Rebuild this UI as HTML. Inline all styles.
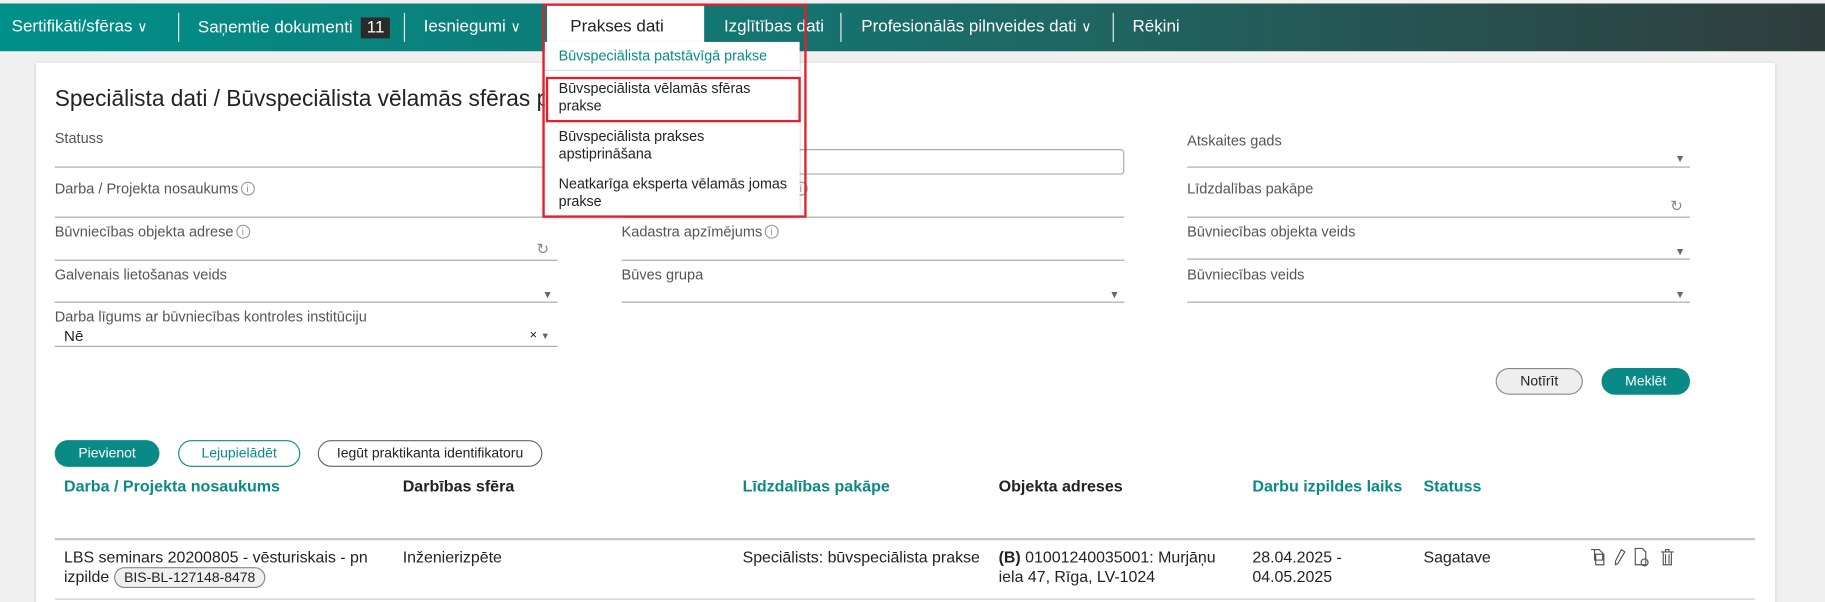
<!DOCTYPE html>
<html><head><meta charset="utf-8"><style>
*{box-sizing:border-box;margin:0;padding:0}
html,body{width:1825px;height:602px;overflow:hidden;background:#f0f0f0}
#w{width:1568px;height:517px;transform:scale(1.16390,1.1644);transform-origin:0 0;position:relative;font-family:"Liberation Sans",Arial,sans-serif;color:#222}
.a{position:absolute;white-space:nowrap}
.nav{position:absolute;left:0;top:3px;width:1568px;height:41px;background:linear-gradient(90deg,#00908a 0%,#0f7a76 35%,#1f6562 60%,#2f3d3c 100%)}
.ni{position:absolute;top:12px;color:#fff;font-size:14.6px}
.sep{position:absolute;top:8px;width:1px;height:25px;background:#e8f0f0}
.card{position:absolute;left:31px;top:54px;width:1494px;height:470px;background:#fff;box-shadow:0 0 3px rgba(0,0,0,.15)}
.lb{position:absolute;font-size:12.5px;color:#555;white-space:nowrap}
.ln{position:absolute;height:1px;background:#aaa;width:432px}
.ar{position:absolute;font-size:9px;color:#666}
.ic{display:inline-block;width:12px;height:12px;border:1px solid #999;border-radius:50%;font-size:9px;color:#999;text-align:center;line-height:11px;vertical-align:1px;margin-left:2px}
.btn{position:absolute;height:23px;border-radius:12px;font-size:12px;text-align:center;line-height:22px}
.th{position:absolute;top:410px;font-size:13.8px;font-weight:bold;color:#0a8a86}
.td{position:absolute;font-size:13.7px;color:#222;line-height:17px}
.dd{position:absolute;left:468px;top:36px;width:219px;height:149px;background:#fff;box-shadow:0 2px 4px rgba(0,0,0,.2)}
.di{position:absolute;left:12px;font-size:12.3px;color:#222;line-height:15px}
</style></head><body><div id="w">
<div class="nav">
<span class="ni" style="left:10px">Sertifikāti/sfēras <span style="font-size:12px">&#8744;</span></span>
<div class="sep" style="left:153px"></div>
<span class="ni" style="left:170px">Saņemtie dokumenti <span style="display:inline-block;background:#2a2a2a;padding:1px 5px;margin-left:3px">11</span></span>
<div class="sep" style="left:347px"></div>
<span class="ni" style="left:364px">Iesniegumi <span style="font-size:12px">&#8744;</span></span>
<div style="position:absolute;left:470px;top:0;width:135px;height:36px;background:#fff"></div>
<span class="ni" style="left:490px;color:#222">Prakses dati</span>
<span class="ni" style="left:622px">Izglītības dati</span>
<div class="sep" style="left:722px"></div>
<span class="ni" style="left:740px">Profesionālās pilnveides dati <span style="font-size:12px">&#8744;</span></span>
<div class="sep" style="left:956px"></div>
<span class="ni" style="left:973px">Rēķini</span>
</div>
<div class="card"></div>
<div class="a" style="left:47px;top:74px;font-size:19.5px;color:#222">Speciālista dati / Būvspeciālista vēlamās sfēras prakse</div>

<div class="lb" style="left:47px;top:112px">Statuss</div><div class="ln" style="left:47px;top:143px"></div>
<div class="lb" style="left:47px;top:155px">Darba / Projekta nosaukums<span class="ic">i</span></div><div class="ln" style="left:47px;top:186px"></div>
<div class="lb" style="left:47px;top:192px">Būvniecības objekta adrese<span class="ic">i</span></div><div class="ln" style="left:47px;top:223px"></div>
<div class="a" style="left:461px;top:206px;font-size:13px;color:#888">&#8635;</div>
<div class="lb" style="left:47px;top:229px">Galvenais lietošanas veids</div><div class="ln" style="left:47px;top:259px"></div><div class="ar" style="left:466px;top:248px">&#9660;</div>
<div class="lb" style="left:47px;top:265px">Darba līgums ar būvniecības kontroles institūciju</div>
<div class="a" style="left:55px;top:281px;font-size:13px">Nē</div><div class="a" style="left:455px;top:282px;font-size:11px">× <span style="font-size:8px;color:#666">&#9660;</span></div>
<div class="ln" style="left:47px;top:297px"></div>

<div style="position:absolute;left:534px;top:128px;width:432px;height:22px;border:1px solid #aaa;border-radius:3px"></div>
<div class="lb" style="left:680px;top:155px"><span class="ic">i</span></div><div class="ln" style="left:534px;top:186px"></div>
<div class="lb" style="left:534px;top:192px">Kadastra apzīmējums<span class="ic">i</span></div><div class="ln" style="left:534px;top:223px"></div>
<div class="lb" style="left:534px;top:229px">Būves grupa</div><div class="ln" style="left:534px;top:259px"></div><div class="ar" style="left:953px;top:248px">&#9660;</div>

<div class="lb" style="left:1020px;top:114px">Atskaites gads</div><div class="ln" style="left:1020px;top:143px"></div><div class="ar" style="left:1439px;top:131px">&#9660;</div>
<div class="lb" style="left:1020px;top:155px">Līdzdalības pakāpe</div><div class="ln" style="left:1020px;top:186px"></div>
<div class="a" style="left:1435px;top:169px;font-size:13px;color:#888">&#8635;</div>
<div class="lb" style="left:1020px;top:192px">Būvniecības objekta veids</div><div class="ln" style="left:1020px;top:222px"></div><div class="ar" style="left:1439px;top:211px">&#9660;</div>
<div class="lb" style="left:1020px;top:229px">Būvniecības veids</div><div class="ln" style="left:1020px;top:259px"></div><div class="ar" style="left:1439px;top:248px">&#9660;</div>

<div class="btn" style="left:1285px;top:316px;width:75px;background:#eee;border:1px solid #888;color:#222;line-height:21px">Notīrīt</div>
<div class="btn" style="left:1376px;top:316px;width:76px;background:#0a8a86;color:#fff">Meklēt</div>
<div class="btn" style="left:47px;top:378px;width:90px;background:#0a8a86;color:#fff">Pievienot</div>
<div class="btn" style="left:153px;top:378px;width:105px;border:1px solid #0a8a86;color:#0a8a86;line-height:21px">Lejupielādēt</div>
<div class="btn" style="left:273px;top:378px;width:193px;border:1px solid #666;color:#222;line-height:21px">Iegūt praktikanta identifikatoru</div>

<div class="th" style="left:55px">Darba / Projekta nosaukums</div>
<div class="th" style="left:346px;color:#222">Darbības sfēra</div>
<div class="th" style="left:638px">Līdzdalības pakāpe</div>
<div class="th" style="left:858px;color:#222">Objekta adreses</div>
<div class="th" style="left:1076px">Darbu izpildes laiks</div>
<div class="th" style="left:1223px">Statuss</div>
<div style="position:absolute;left:47px;top:462px;width:1461px;height:2px;background:#c8c8c8"></div>
<div class="td" style="left:55px;top:470px">LBS seminars 20200805 - vēsturiskais - pn<br>izpilde <span style="display:inline-block;border:1px solid #888;background:#f0f0f0;border-radius:9px;font-size:12px;padding:0 8px;line-height:16px">BIS-BL-127148-8478</span></div>
<div class="td" style="left:346px;top:470px">Inženierizpēte</div>
<div class="td" style="left:638px;top:470px">Speciālists: būvspeciālista prakse</div>
<div class="td" style="left:858px;top:470px"><b>(B)</b> 01001240035001: Murjāņu<br>iela 47, Rīga, LV-1024</div>
<div class="td" style="left:1076px;top:470px">28.04.2025 -<br>04.05.2025</div>
<div class="td" style="left:1223px;top:470px">Sagatave</div>
<svg class="a" style="left:1366px;top:469px" width="78" height="18" viewBox="0 0 78 18" fill="none" stroke="#555" stroke-width="1">
<path d="M1 3h7l3 3v6H4V3z M5 7h7v9H5z"/><path d="M27 3l3 2-6 10-2 1 0-3z"/>
<path d="M39 2h6l3 3v11h-9z"/><circle cx="47" cy="14" r="3"/>
<path d="M61 5h11M63 5v11h7V5M65 7v8M68 7v8M65 5V3h3v2"/></svg>
<div style="position:absolute;left:47px;top:514px;width:1461px;height:1px;background:#ccc"></div>

<div class="dd">
<div class="di" style="top:5px;color:#0a8a86">Būvspeciālista patstāvīgā prakse</div>
<div style="position:absolute;left:0;top:24px;width:219px;height:1px;background:#ddd"></div>
<div class="di" style="top:33px">Būvspeciālista vēlamās sfēras<br>prakse</div>
<div class="di" style="top:74px">Būvspeciālista prakses<br>apstiprināšana</div>
<div class="di" style="top:115px">Neatkarīga eksperta vēlamās jomas<br>prakse</div>
</div>
<div style="position:absolute;left:466px;top:3px;width:227px;height:184px;border:2px solid #e0202a"></div>
<div style="position:absolute;left:469px;top:66px;width:219px;height:39px;border:2px solid #e0202a"></div>
</div></body></html>
